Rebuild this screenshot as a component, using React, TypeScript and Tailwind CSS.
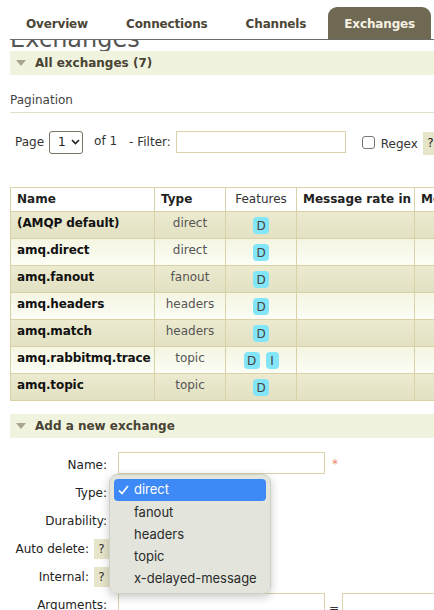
import React from "react";

const rows = [
  { name: "(AMQP default)", type: "direct", f: ["D"] },
  { name: "amq.direct", type: "direct", f: ["D"] },
  { name: "amq.fanout", type: "fanout", f: ["D"] },
  { name: "amq.headers", type: "headers", f: ["D"] },
  { name: "amq.match", type: "headers", f: ["D"] },
  { name: "amq.rabbitmq.trace", type: "topic", f: ["D", "I"] },
  { name: "amq.topic", type: "topic", f: ["D"] },
];

function Triangle() {
  return (
    <svg width="10" height="7" viewBox="0 0 10 7" className="shrink-0">
      <polygon points="0,0 10,0 5,6" fill="#aba58f" />
    </svg>
  );
}

function SectionBar({ title }: { title: string }) {
  return (
    <div className="h-[24px] bg-[#f0f3de] flex items-center pl-[6px] gap-[9px]">
      <Triangle />
      <span className="font-bold text-[12px] text-[#484335]">{title}</span>
    </div>
  );
}

function Help() {
  return (
    <span className="inline-flex items-center justify-center w-[15px] h-[20px] bg-[#e6e4c9] text-[#333] text-[12px]">?</span>
  );
}

export default function App() {
  const items = ["direct", "fanout", "headers", "topic", "x-delayed-message"];
  return (
    <div className="w-[434px] h-[610px] overflow-hidden bg-white relative font-['DejaVu_Sans',sans-serif] text-[12px] text-[#222]">
      <div className="pl-[10px] w-[760px]">
        {/* Tabs */}
        <div className="flex gap-[6px] pt-[7px] border-b border-[#6a6a6a] tracking-[-0.15px]">
          {["Overview", "Connections", "Channels"].map((t) => (
            <div key={t} className="h-[32px] px-4 pt-[2px] flex items-center font-bold text-[#4b4636]">
              {t}
            </div>
          ))}
          <div className="h-[32px] px-4 pt-[2px] flex items-center font-bold text-[#f5f2e2] bg-[#6f6853] rounded-t-[9px]">
            Exchanges
          </div>
        </div>
        {/* Clipped heading */}
        <div className="h-[11px] overflow-hidden">
          <div className="text-[24px] leading-none -mt-[13px] text-[#555]">Exchanges</div>
        </div>
        <SectionBar title="All exchanges (7)" />

        <div className="mt-[18px] pb-[4px] leading-[15px] text-[#444] border-b border-[#e2dfc6]">Pagination</div>

        {/* Pagination row */}
        <div className="flex items-center mt-[17px] pl-[5px] h-[24px]">
          <span className="text-[#333]">Page</span>
          <div className="ml-[5px] w-[34px] h-[23px] border border-[#7a7262] rounded-[3px] flex items-center pl-[8px] gap-[5px]">
            <span>1</span>
            <svg width="9" height="6" viewBox="0 0 9 6">
              <polyline points="1,1 4.5,4.5 8,1" fill="none" stroke="#222" strokeWidth="1.6" />
            </svg>
          </div>
          <span className="ml-[11px] -mt-[3px] text-[#333]">of 1</span>
          <span className="ml-[12px] text-[#333]">- Filter:</span>
          <div className="ml-[5px] w-[170px] h-[22px] border border-[#d9d2ac]" />
          <div className="ml-[16px] w-[13px] h-[13px] border border-[#777] rounded-[3px]" />
          <span className="ml-[6px] mt-[4px] text-[#333]">Regex</span>
          <span className="ml-[5px] inline-flex items-center justify-center w-[15px] h-[23px] bg-[#e6e4c9] mt-[2px]">?</span>
        </div>

        {/* Table */}
        <table className="mt-[33px] w-[534px] border-collapse text-[12px] table-fixed">
          <thead>
            <tr className="h-[24px]">
              <th className="w-[144px] border border-[#d9d1a8] text-left font-bold pl-[6px] pr-0 leading-[15px] bg-white">Name</th>
              <th className="w-[71px] border border-[#d9d1a8] text-left font-bold px-[6px] leading-[15px] bg-white">Type</th>
              <th className="w-[71px] border border-[#d9d1a8] text-center font-normal px-0 leading-[15px] bg-white text-[#333]">Features</th>
              <th className="w-[118px] border border-[#d9d1a8] text-left font-bold pl-[6px] pr-0 leading-[15px] bg-white whitespace-nowrap">Message rate in</th>
              <th className="w-[130px] border border-[#d9d1a8] text-left font-bold pl-[6px] pr-0 leading-[15px] bg-white whitespace-nowrap">Message rate out</th>
            </tr>
          </thead>
          <tbody>
            {rows.map((r, i) => {
              const bg =
                i % 2 === 0
                  ? "bg-[linear-gradient(#eceacf,#e3e1c3)]"
                  : "bg-[linear-gradient(#f4f5e1,#fcfdf6)]";
              return (
                <tr key={r.name} className={"h-[27px] " + bg}>
                  <td className="border border-[#d9d1a8] align-top pt-[4px] pl-[6px] pr-0 font-bold leading-[14px] whitespace-nowrap text-[#111] tracking-[-0.1px]">{r.name}</td>
                  <td className="border border-[#d9d1a8] align-top pt-[4px] px-0 text-center leading-[14px] text-[#555]">{r.type}</td>
                  <td className="border border-[#d9d1a8] align-top pt-[5px] px-0 text-center leading-[14px]">
                    <div className="flex justify-center gap-[6px]">
                      {r.f.map((x) => (
                        <span
                          key={x}
                          className={
                            "inline-flex items-center justify-center h-[17px] rounded-[4px] bg-[#83e6f8] text-[#444] " +
                            (x === "D" ? "w-[16px]" : "w-[13px]")
                          }
                        >
                          {x}
                        </span>
                      ))}
                    </div>
                  </td>
                  <td className="border border-[#d9d1a8]" />
                  <td className="border border-[#d9d1a8]" />
                </tr>
              );
            })}
          </tbody>
        </table>

        <div className="mt-[13px]">
          <SectionBar title="Add a new exchange" />
        </div>

        {/* Form */}
        <div className="mt-[13px] grid grid-cols-[100px_1fr] text-[#222]">
          <div className="h-[28px] flex items-center justify-end pr-[3px]">Name:</div>
          <div className="h-[28px] flex items-start pl-[8px]">
            <div className="mt-[1px] w-[207px] h-[22px] border border-[#d9d2ac]" />
            <span className="ml-[7px] mt-[4px] text-[#f2876b]">*</span>
          </div>

          <div className="h-[28px] flex items-center justify-end pr-[3px]">Type:</div>
          <div className="h-[28px]" />

          <div className="h-[28px] flex items-center justify-end pr-[3px]">Durability:</div>
          <div className="h-[28px]" />

          <div className="h-[28px] flex items-center justify-end gap-[5px] pr-[1px]">
            <span>Auto delete:</span>
            <Help />
          </div>
          <div className="h-[28px]" />

          <div className="h-[28px] flex items-center justify-end gap-[5px] pr-[1px]">
            <span>Internal:</span>
            <Help />
          </div>
          <div className="h-[28px]" />

          <div className="h-[28px] flex items-center justify-end pr-[3px]">Arguments:</div>
          <div className="h-[28px] flex items-start pl-[8px]">
            <div className="mt-[2px] w-[207px] h-[26px] border border-[#d9d2ac]" />
            <span className="ml-[4px] mt-[8px] text-[#333]">=</span>
            <div className="ml-[3px] mt-[2px] w-[200px] h-[26px] border border-[#d9d2ac]" />
          </div>
        </div>
      </div>

      {/* Dropdown overlay */}
      <div className="absolute left-[109px] top-[474px] w-[162px] h-[120px] rounded-[8px] bg-[#e2e4db]/95 border border-[#cfd0c8] shadow-[0_3px_10px_rgba(0,0,0,0.22)] p-[4px] font-['Inter',sans-serif] text-[13px] text-[#2a2a2a]">
        {items.map((it, i) => (
          <div
            key={it}
            className={
              "flex items-center h-[22px] rounded-[4px] pl-[4px] " +
              (i === 0 ? "bg-[#3d89f6] text-white h-[21px] mb-[1px]" : "")
            }
          >
            <span className="w-[16px] flex items-center">
              {i === 0 ? (
                <svg width="11" height="10" viewBox="0 0 11 10">
                  <polyline points="1,5.5 4,8.5 10,1" fill="none" stroke="white" strokeWidth="1.7" />
                </svg>
              ) : null}
            </span>
            <span>{it}</span>
          </div>
        ))}
      </div>
    </div>
  );
}
